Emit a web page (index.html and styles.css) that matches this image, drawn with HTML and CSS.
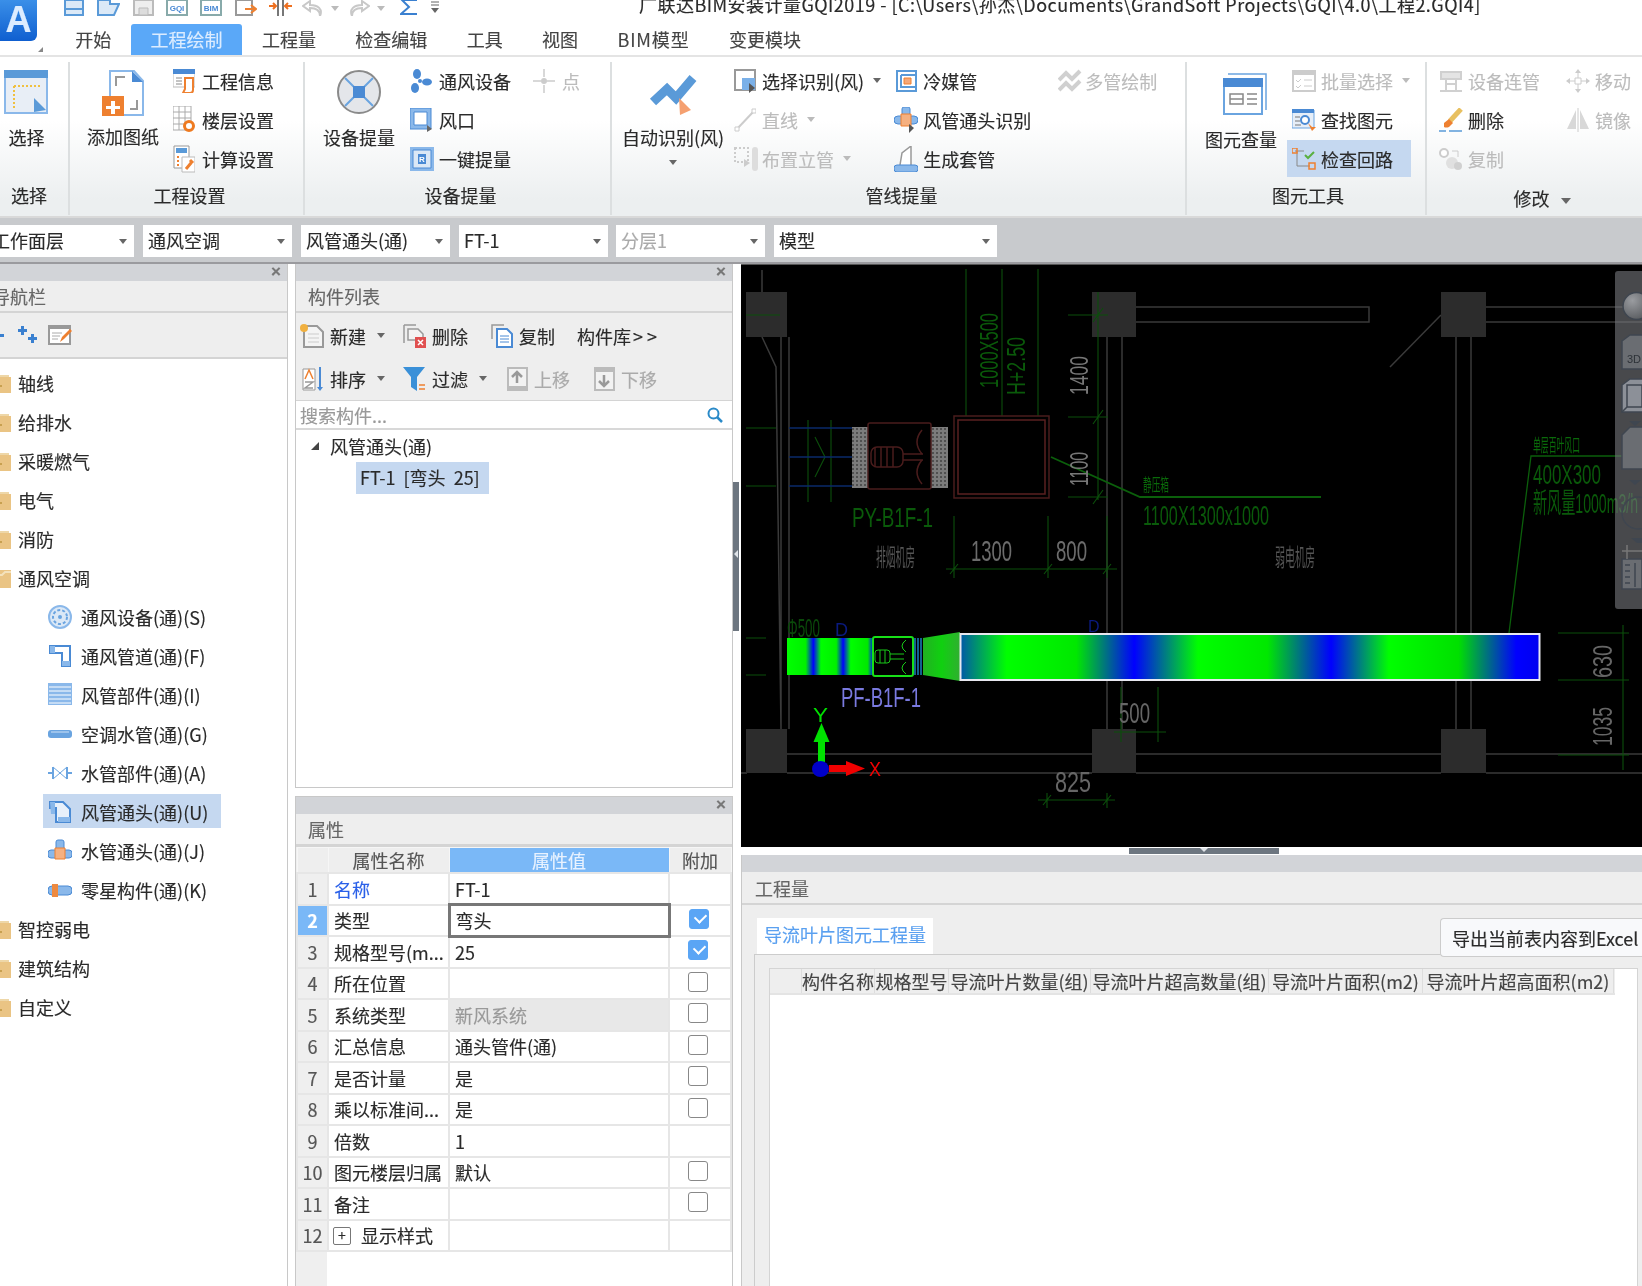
FILE: index.html
```html
<!DOCTYPE html>
<html lang="zh-CN">
<head>
  <meta charset="UTF-8">
  <title>广联达BIM安装计量GQI2019</title>
  <link rel="stylesheet" href="styles.css">
</head>
<body>

<svg class="defs" width="0" height="0">
  <symbol id="i-folder" viewBox="0 0 22 20"><path d="M2 2h18v2H2z" fill="#eed7a8"/><path d="M0 4h22v16H0z" fill="#eac484"/><path d="M8 9v3H5v2h3v3h2v-3h3v-2h-3V9z" fill="#c8a050"/></symbol>
  <symbol id="i-caret" viewBox="0 0 10 6"><path d="M0 0h10L5 6z" fill="#666"/></symbol>
  <symbol id="i-caret-off" viewBox="0 0 10 6"><path d="M0 0h10L5 6z" fill="#bbb"/></symbol>
</svg>

<div class="app">

  <header class="top">
    <div class="logo">A<span class="logo-mark"></span></div>
    <div class="top-right">
      <div class="qat">
        <svg class="qi" width="20" height="16" viewBox="0 0 20 16"><path d="M1 0h18v15H1z" fill="#dbe9f7" stroke="#5a9ad8" stroke-width="2"/><path d="M1 9h18" stroke="#5a9ad8" stroke-width="2"/></svg>
        <svg class="qi" width="23" height="16" viewBox="0 0 23 16"><path d="M1 15V0h12v4h9l-5 11z" fill="#dbe9f7" stroke="#5a9ad8" stroke-width="2"/></svg>
        <svg class="qi" width="21" height="16" viewBox="0 0 21 16"><path d="M1 0h19v15H1z" fill="#eee" stroke="#bbb" stroke-width="2"/><path d="M6 8h9v7H6z" fill="#ddd" stroke="#bbb"/></svg>
        <svg class="qi qi-tight" width="22" height="16" viewBox="0 0 22 16"><path d="M1 0h20v15H1z" fill="#fff" stroke="#8aa" stroke-width="2"/><text x="11" y="11" class="qi-text">GQI</text></svg>
        <svg class="qi qi-tight" width="22" height="16" viewBox="0 0 22 16"><path d="M1 0h20v15H1z" fill="#fff" stroke="#8aa" stroke-width="2"/><text x="11" y="11" class="qi-text">BIM</text></svg>
        <svg class="qi" width="22" height="16" viewBox="0 0 22 16"><path d="M1 0h16v15H1z" fill="#fff" stroke="#999" stroke-width="2"/><path d="M10 9h10M16 5l5 4-5 4" fill="none" stroke="#ee8030" stroke-width="2"/></svg>
        <svg class="qi qi-tight" width="23" height="16" viewBox="0 0 23 16"><path d="M9 0v16M14 0v16" stroke="#777" stroke-width="2"/><path d="M0 6h7M4 3l3 3-3 3M16 6h7M19 3l-3 3 3 3" fill="none" stroke="#ee7020" stroke-width="2"/></svg>
        <svg class="qi qi-undo" width="22" height="16" viewBox="0 0 22 16"><path d="M8 1L1 6l7 5V8c6 0 10 2 10 8 3-7-2-11-10-11z" fill="none" stroke="#c8c8c8" stroke-width="2"/></svg>
        <svg class="caret-q" width="8" height="5"><use href="#i-caret-off"/></svg>
        <svg class="qi qi-redo" width="22" height="16" viewBox="0 0 22 16"><path d="M14 1l7 5-7 5V8C8 8 4 10 4 16 1 9 6 5 14 5z" fill="none" stroke="#c8c8c8" stroke-width="2"/></svg>
        <svg class="caret-q" width="8" height="5"><use href="#i-caret-off"/></svg>
        <svg class="qi qi-wide" width="18" height="16" viewBox="0 0 18 16"><path d="M17 0H2l7 7-8 7h16" fill="none" stroke="#3a80d0" stroke-width="2"/></svg>
        <svg class="qi" width="8" height="14" viewBox="0 0 8 14"><path d="M0 2h8M0 5h8" stroke="#666"/><path d="M0 8h8l-4 5z" fill="#666"/></svg>
      </div>
      <div class="win-title">广联达BIM安装计量GQI2019 - [C:\Users\孙杰\Documents\GrandSoft Projects\GQI\4.0\工程2.GQI4]</div>
      <nav class="tabs">
        <span class="tab">开始</span>
        <span class="tab tab-on">工程绘制</span>
        <span class="tab">工程量</span>
        <span class="tab">检查编辑</span>
        <span class="tab">工具</span>
        <span class="tab">视图</span>
        <span class="tab tab-latin">BIM模型</span>
        <span class="tab">变更模块</span>
      </nav>
    </div>
  </header>

  <section class="ribbon">

    <div class="group g1">
      <div class="group-body">
        <div class="big big-select">
          <svg width="44" height="44" viewBox="0 0 44 44"><path d="M1 1h42v42H1z" fill="#e8eef6" stroke="#8ab8ea" stroke-width="2"/><path d="M0 0h44v8H0z" fill="#5a9ad8"/><path d="M10 16h26M10 16v22" stroke="#f0c040" stroke-width="2" stroke-dasharray="2 2"/><path d="M30 28l12 12-12 2z" fill="#5a9ad8"/></svg>
          <span>选择</span>
        </div>
      </div>
      <div class="group-label">选择</div>
    </div>

    <div class="group g2">
      <div class="group-body">
        <div class="big big-add">
          <svg width="42" height="46" viewBox="0 0 42 46"><path d="M8 1h24l9 10v34H8z" fill="#fff" stroke="#8ab8ea" stroke-width="2"/><path d="M30 1l11 11H30z" fill="#4a8ad4"/><path d="M14 16V7h9M35 30v9h-7" fill="none" stroke="#999" stroke-width="2"/><path d="M0 26h22v22H0z" fill="#ee8030"/><path d="M9 31h4v5h5v3h-5v5H9v-5H4v-3h5z" fill="#fff"/></svg>
          <span>添加图纸</span>
        </div>
        <div class="col col-g2">
          <div class="small">
            <svg width="22" height="24" viewBox="0 0 22 24"><path d="M0 0h22v18H0z" fill="#fff" stroke="#bbb"/><path d="M0 0h22v5H0z" fill="#4a8ad4"/><path d="M3 9h6M3 12h6M3 15h6" stroke="#888"/><path d="M12 9h8v12q0 3-3 3h-7l2-4z" fill="#fff" stroke="#ee8030" stroke-width="2"/></svg>
            <span>工程信息</span>
          </div>
          <div class="small">
            <svg width="22" height="28" viewBox="0 0 22 28"><path d="M0 0h18v24H0zM0 6h18M0 12h18M0 18h18M6 0v24M12 0v24" fill="#fff" stroke="#aaa"/><circle cx="16" cy="20" r="4.500" fill="#fff" stroke="#ee7a20" stroke-width="3"/></svg>
            <span>楼层设置</span>
          </div>
          <div class="small">
            <svg width="22" height="28" viewBox="0 0 22 28"><path d="M1 1h15v22H1z" fill="#fff" stroke="#999"/><path d="M3 3h11v5H3z" fill="#5a9ad8"/><path d="M4 12h2M4 16h2M4 20h2" stroke="#ee8030" stroke-width="2"/><path d="M9 12h13v15H9z" fill="#fff" stroke="#bbb"/><path d="M13 24l5-6M17 15l3 3" stroke="#ee8030" stroke-width="3"/></svg>
            <span>计算设置</span>
          </div>
        </div>
      </div>
      <div class="group-label">工程设置</div>
    </div>

    <div class="group g3">
      <div class="group-body">
        <div class="big big-equip">
          <svg width="44" height="44" viewBox="0 0 44 44"><circle cx="22" cy="22" r="21" fill="#e4e6ea" stroke="#8a8a8a" stroke-width="2"/><path d="M8 8l28 28M36 8L8 36" stroke="#6aa4e0" stroke-width="2"/><path d="M16 16h12v12H16z" fill="#4a8ad4"/></svg>
          <span>设备提量</span>
        </div>
        <div class="col col-g3a">
          <div class="small">
            <svg width="22" height="24" viewBox="0 0 22 24"><circle cx="10" cy="12" r="2" fill="#4a8ad4"/><ellipse cx="7" cy="5" rx="4" ry="5" fill="#4a8ad4"/><ellipse cx="17" cy="13" rx="5" ry="3.500" fill="#4a8ad4"/><ellipse cx="5" cy="19" rx="4" ry="5" fill="#4a8ad4"/></svg>
            <span>通风设备</span>
          </div>
          <div class="small">
            <svg width="22" height="24" viewBox="0 0 22 24"><path d="M0 0h21v21H0z" fill="#8ab8ea" stroke="#4a8ad4"/><path d="M4 4h13v13H4z" fill="#fff" stroke="#4a8ad4"/><path d="M17 17l5 4-5 3z" fill="#666"/></svg>
            <span>风口</span>
          </div>
          <div class="small">
            <svg class="wide-icon" width="24" height="24" viewBox="0 0 24 24"><path d="M0 0h24v24H0z" fill="#8ab8ea"/><path d="M3 3h18v18H3z" fill="#dbe8f6" stroke="#4a8ad4"/><path d="M8 7h8v10H8z" fill="#4a8ad4"/><text x="12" y="15" class="qi-text qi-text-w">R</text></svg>
            <span>一键提量</span>
          </div>
        </div>
        <div class="col col-g3b">
          <div class="small off">
            <svg width="22" height="24" viewBox="0 0 22 24"><path d="M0 12h8M14 12h8M11 0v8M11 16v8" stroke="#ccc" stroke-width="1.500"/><circle cx="11" cy="12" r="3" fill="#ccc"/></svg>
            <span>点</span>
          </div>
        </div>
      </div>
      <div class="group-label">设备提量</div>
    </div>

    <div class="group g4">
      <div class="group-body">
        <div class="big big-auto">
          <svg width="48" height="46" viewBox="0 0 48 46"><path d="M4 32l14-13 9 9 17-20" fill="none" stroke="#5a9ad8" stroke-width="9"/><path d="M30 28l12 12-11 5z" fill="#f5a070"/></svg>
          <span>自动识别(风)</span>
          <svg class="big-caret" width="8" height="5"><use href="#i-caret"/></svg>
        </div>
        <div class="col col-g4a">
          <div class="small">
            <svg width="22" height="24" viewBox="0 0 22 24"><path d="M1 1h20v20H1z" fill="#fff" stroke="#999" stroke-width="2"/><path d="M8 9h13v12H8z" fill="#7ab0e8"/><path d="M15 14l6 5-6 5z" fill="#555"/></svg>
            <span>选择识别(风)</span>
            <svg class="c" width="8" height="5"><use href="#i-caret"/></svg>
          </div>
          <div class="small off">
            <svg width="22" height="24" viewBox="0 0 22 24"><path d="M3 21L20 3" stroke="#ccc" stroke-width="2"/><path d="M1 19h4v4H1zM18 1h4v4h-4z" fill="#fff" stroke="#ccc"/></svg>
            <span>直线</span>
            <svg class="c" width="8" height="5"><use href="#i-caret-off"/></svg>
          </div>
          <div class="small off">
            <svg class="wide-icon" width="24" height="24" viewBox="0 0 24 24"><path d="M1 1h13v14H1z" fill="none" stroke="#ccc" stroke-width="2" stroke-dasharray="2 2"/><path d="M10 12l6 4-6 4z" fill="#ccc"/><rect x="18" y="0" width="6" height="24" rx="3" fill="#ddd"/></svg>
            <span>布置立管</span>
            <svg class="c" width="8" height="5"><use href="#i-caret-off"/></svg>
          </div>
        </div>
        <div class="col col-g4b">
          <div class="small">
            <svg class="icon-inset" width="21" height="22" viewBox="0 0 21 22"><path d="M1 1h19v20H1z" fill="#fff" stroke="#5a9ad8" stroke-width="2"/><path d="M5 5h15M5 5v12h15" fill="none" stroke="#5a9ad8" stroke-width="2"/><path d="M8 8h7v6H8z" fill="#f5a878" stroke="#ee8030"/></svg>
            <span>冷媒管</span>
          </div>
          <div class="small">
            <svg width="24" height="26" viewBox="0 0 24 26"><rect x="8" y="0" width="8" height="8" rx="2" fill="#8ab8ea" stroke="#4a8ad4"/><rect x="0" y="9" width="24" height="8" rx="4" fill="#8ab8ea" stroke="#4a8ad4"/><path d="M7 7h10v12H7z" fill="#f5b080" stroke="#ee8030"/><path d="M15 17l5 4-5 5z" fill="#555"/></svg>
            <span>风管通头识别</span>
          </div>
          <div class="small">
            <svg width="24" height="26" viewBox="0 0 24 26"><path d="M6 19L8 7l9-7v19" fill="#fff" stroke="#999" stroke-width="1.500"/><rect x="0" y="19" width="24" height="7" rx="3" fill="#8ab8ea" stroke="#4a8ad4"/></svg>
            <span>生成套管</span>
          </div>
        </div>
        <div class="col col-g4c">
          <div class="small off">
            <svg width="24" height="24" viewBox="0 0 24 24"><path d="M1 11l7-7 6 6 8-8M1 21l7-7 6 6 8-8" fill="none" stroke="#d0d0d0" stroke-width="4"/></svg>
            <span>多管绘制</span>
          </div>
        </div>
      </div>
      <div class="group-label">管线提量</div>
    </div>

    <div class="group g5">
      <div class="group-body">
        <div class="big big-count">
          <svg width="44" height="42" viewBox="0 0 44 42"><path d="M5 1h38v36" fill="none" stroke="#6aa4e0" stroke-width="1.500"/><path d="M1 6h38v35H1z" fill="#fff" stroke="#6aa4e0" stroke-width="2"/><path d="M0 5h40v9H0z" fill="#4a8ad4"/><path d="M7 21h13v10H7zM7 26h13M24 21h10M24 26h10M24 31h10" fill="none" stroke="#888" stroke-width="1.500"/></svg>
          <span>图元查量</span>
        </div>
        <div class="col col-g5">
          <div class="small off">
            <svg width="24" height="22" viewBox="0 0 24 22"><path d="M1 1h22v20H1z" fill="#fff" stroke="#ccc" stroke-width="2"/><path d="M0 0h24v5H0z" fill="#ccc"/><path d="M4 10l2 2 3-3M4 16l2 2 3-3M12 10h8M12 16h8" fill="none" stroke="#ccc"/></svg>
            <span>批量选择</span>
            <svg class="c" width="8" height="5"><use href="#i-caret-off"/></svg>
          </div>
          <div class="small">
            <svg width="24" height="22" viewBox="0 0 24 22"><path d="M0 1h22v18H0z" fill="#e6eef8" stroke="#6aa4e0"/><path d="M0 0h22v4H0z" fill="#4a8ad4"/><circle cx="13" cy="11" r="4" fill="#fff" stroke="#4a8ad4" stroke-width="2"/><path d="M3 8h5M3 12h5M3 16h6" stroke="#777"/><path d="M16 14l4 4 4 0-4 4z" fill="#ee8030"/></svg>
            <span>查找图元</span>
          </div>
          <div class="small small-on">
            <svg width="24" height="22" viewBox="0 0 24 22"><path d="M3 3h9M5 3v15h13" fill="none" stroke="#888"/><path d="M0 0h5v5H0zM17 15h6v6h-6z" fill="none" stroke="#ee8030" stroke-width="1.500"/><path d="M13 7l3 3 6-6" fill="none" stroke="#5ab040" stroke-width="2"/></svg>
            <span>检查回路</span>
          </div>
        </div>
      </div>
      <div class="group-label">图元工具</div>
    </div>

    <div class="group g6">
      <div class="group-body">
        <div class="col col-g6a">
          <div class="small off">
            <svg width="24" height="22" viewBox="0 0 24 22"><path d="M2 2h20v7H2zM7 9v12M17 9v12M1 21h22M7 14h10" fill="#e4e4e4" stroke="#d0d0d0" stroke-width="2"/></svg>
            <span>设备连管</span>
          </div>
          <div class="small">
            <svg width="24" height="24" viewBox="0 0 24 24"><path d="M11 13L22 1" stroke="#e8c060" stroke-width="5"/><path d="M5 15l5-4 4 4-4 4q-3 1-5 0z" fill="#ee8030"/><path d="M0 23h7M10 23h13" stroke="#5a9ad8" stroke-width="1.500"/></svg>
            <span>删除</span>
          </div>
          <div class="small off">
            <svg width="24" height="22" viewBox="0 0 24 22"><circle cx="5" cy="5" r="4" fill="#fff" stroke="#ccc" stroke-width="2"/><circle cx="13" cy="15" r="6" fill="#e0e0e0"/><circle cx="19" cy="18" r="4" fill="#d0d0d0"/><path d="M13 3h6v6" fill="none" stroke="#ccc"/></svg>
            <span>复制</span>
          </div>
        </div>
        <div class="col col-g6b">
          <div class="small off">
            <svg width="24" height="24" viewBox="0 0 24 24"><path d="M12 0l3 4h-6zM12 24l-3-4h6zM0 12l4-3v6zM24 12l-4 3V9z" fill="#ccc"/><path d="M9 9h6v6H9zM12 4v5M12 15v5M4 12h5M15 12h5" fill="none" stroke="#ccc"/></svg>
            <span>移动</span>
          </div>
          <div class="small off">
            <svg width="24" height="24" viewBox="0 0 24 24"><path d="M10 2L1 21h9zM14 2l9 19h-9z" fill="#d8d8d8"/><path d="M12 0v24" stroke="#ccc"/></svg>
            <span>镜像</span>
          </div>
        </div>
      </div>
      <div class="group-label group-label-fold">修改<svg class="c-fold" width="10" height="6"><use href="#i-caret"/></svg></div>
    </div>

  </section>

  <div class="combos">
    <div class="combo combo-first"><span>工作面层</span><i></i></div>
    <div class="combo"><span>通风空调</span><i></i></div>
    <div class="combo"><span>风管通头(通)</span><i></i></div>
    <div class="combo"><span>FT-1</span><i></i></div>
    <div class="combo combo-off"><span>分层1</span><i></i></div>
    <div class="combo combo-wide"><span>模型</span><i></i></div>
  </div>

  <main class="work">

    <aside class="nav panel">
      <div class="panel-bar">×</div>
      <div class="panel-title nav-title">导航栏</div>
      <div class="nav-tools">
        <span class="minus"></span>
        <svg class="plus2" width="20" height="18" viewBox="0 0 20 18"><path d="M3 0h3v3h3v3H6v3H3V6H0V3h3zM13 8h3v3h3v3h-3v3h-3v-3h-3v-3h3z" fill="#3a80d0"/></svg>
        <svg class="edit" width="25" height="20" viewBox="0 0 25 20"><path d="M1 1h21v18H1z" fill="#fff" stroke="#999" stroke-width="2"/><path d="M0 0h22v4H0z" fill="#999"/><path d="M4 8h10M4 11h8M4 14h6" stroke="#aaa"/><path d="M12 17l2-5 8-8 2 2-8 8z" fill="#ee8030"/></svg>
      </div>
      <ul class="tree">
        <li class="folder"><svg width="22" height="20"><use href="#i-folder"/></svg>轴线</li>
        <li class="folder"><svg width="22" height="20"><use href="#i-folder"/></svg>给排水</li>
        <li class="folder"><svg width="22" height="20"><use href="#i-folder"/></svg>采暖燃气</li>
        <li class="folder"><svg width="22" height="20"><use href="#i-folder"/></svg>电气</li>
        <li class="folder"><svg width="22" height="20"><use href="#i-folder"/></svg>消防</li>
        <li class="folder"><svg width="22" height="20" viewBox="0 0 22 20"><path d="M0 2h22v18H0z" fill="#eac484"/><path d="M0 7h13l3-3h6" fill="none" stroke="#f4e2bc" stroke-width="2"/><path d="M0 12h8" stroke="#c8a050" stroke-width="2"/></svg>通风空调</li>
        <li class="leaf">
          <svg width="24" height="24" viewBox="0 0 24 24"><circle cx="12" cy="12" r="11" fill="#dbe8f6" stroke="#8ab8ea" stroke-width="2"/><circle cx="12" cy="12" r="7" fill="none" stroke="#6aa4e0" stroke-dasharray="3 2" stroke-width="2"/><circle cx="12" cy="12" r="2" fill="#6aa4e0"/></svg>
          通风设备(通)(S)
        </li>
        <li class="leaf">
          <svg width="24" height="24" viewBox="0 0 24 24"><path d="M2 2h20v20h-8V9H2z" fill="#fff" stroke="#4a8ad4" stroke-width="2"/><path d="M2 2h5v7H2zM14 17h8v5h-8z" fill="#8ab8ea"/></svg>
          通风管道(通)(F)
        </li>
        <li class="leaf">
          <svg width="24" height="24" viewBox="0 0 24 24"><path d="M0 0h24v22H0z" fill="#8ab8ea"/><path d="M1 4h22M1 8h22M1 12h22M1 16h22M1 20h22" stroke="#fff"/></svg>
          风管部件(通)(I)
        </li>
        <li class="leaf">
          <svg width="24" height="24" viewBox="0 0 24 24"><rect x="0" y="8" width="24" height="8" rx="3" fill="#6aa4e0"/><path d="M3 10h18" stroke="#cfe2f7"/></svg>
          空调水管(通)(G)
        </li>
        <li class="leaf">
          <svg width="24" height="24" viewBox="0 0 24 24"><path d="M0 12h5M19 12h5M5 6v12M19 6v12" stroke="#6aa4e0" stroke-width="2"/><path d="M5 6l14 12M19 6L5 18" stroke="#6aa4e0"/></svg>
          水管部件(通)(A)
        </li>
        <li class="leaf leaf-on">
          <svg width="24" height="24" viewBox="0 0 24 24"><path d="M2 2h13l7 7v13H8V8H2z" fill="#e8f0fa" stroke="#4a8ad4" stroke-width="2"/><path d="M2 2h5v12h-4zM10 17h12v5H10z" fill="#8ab8ea"/></svg>
          风管通头(通)(U)
        </li>
        <li class="leaf">
          <svg width="24" height="24" viewBox="0 0 24 24"><rect x="8" y="1" width="8" height="10" rx="2" fill="#8ab8ea" stroke="#4a8ad4"/><rect x="0" y="11" width="24" height="8" rx="3" fill="#8ab8ea" stroke="#4a8ad4"/><path d="M7 9h10v11H7z" fill="#f5b080" stroke="#ee8030"/></svg>
          水管通头(通)(J)
        </li>
        <li class="leaf">
          <svg width="24" height="24" viewBox="0 0 24 24"><rect x="0" y="8" width="24" height="9" rx="4" fill="#8ab8ea" stroke="#4a8ad4"/><path d="M4 6h6v13H4z" fill="#ee8a40"/></svg>
          零星构件(通)(K)
        </li>
        <li class="folder"><svg width="22" height="20"><use href="#i-folder"/></svg>智控弱电</li>
        <li class="folder"><svg width="22" height="20"><use href="#i-folder"/></svg>建筑结构</li>
        <li class="folder"><svg width="22" height="20"><use href="#i-folder"/></svg>自定义</li>
      </ul>
    </aside>

    <div class="mid">

      <section class="panel list">
        <div class="panel-bar">×</div>
        <div class="panel-title">构件列表</div>
        <div class="list-tools">
          <div class="tool-row">
            <span class="tool t-new">
              <svg width="24" height="24" viewBox="0 0 24 24"><path d="M4 2h13l6 6v15H4z" fill="#f4f4f4" stroke="#999" stroke-width="2"/><path d="M8 10h11M8 14h11M8 18h11" stroke="#ccc"/><circle cx="4" cy="4" r="4" fill="#f0b040"/></svg>
              新建<svg class="c" width="8" height="5"><use href="#i-caret"/></svg>
            </span>
            <span class="tool t-del">
              <svg width="23" height="24" viewBox="0 0 23 24"><path d="M1 1h12M1 1v18M5 5h10l5 5v6H5v-11z" fill="#f4f4f4" stroke="#999" stroke-width="1.500"/><path d="M12 13h11v11H12z" fill="#e05050"/><path d="M15 16l5 5M20 16l-5 5" stroke="#fff" stroke-width="1.500"/></svg>
              删除
            </span>
            <span class="tool t-copy">
              <svg width="22" height="24" viewBox="0 0 22 24"><path d="M1 15V1h12" fill="none" stroke="#999" stroke-width="1.500"/><path d="M6 5h10l5 5v13H6z" fill="#fff" stroke="#4a8ad4" stroke-width="2"/><path d="M9 12h9M9 15h9M9 18h9" stroke="#4a8ad4"/></svg>
              复制
            </span>
            <span class="tool t-lib">构件库<span class="more">&gt;&gt;</span></span>
          </div>
          <div class="tool-row">
            <span class="tool t-sort">
              <svg width="22" height="24" viewBox="0 0 22 24"><path d="M1 2h12v21H1z" fill="#fff" stroke="#999"/><path d="M3 12l4-9 4 9" fill="none" stroke="#ee8030" stroke-width="1.500"/><path d="M3 15h8l-8 6h8" fill="none" stroke="#999" stroke-width="1.500"/><path d="M18 0v21" stroke="#4a8ad4" stroke-width="2"/><path d="M15 20h6l-3 4z" fill="#4a8ad4"/></svg>
              排序<svg class="c" width="8" height="5"><use href="#i-caret"/></svg>
            </span>
            <span class="tool t-filter">
              <svg width="23" height="24" viewBox="0 0 23 24"><path d="M0 0h22l-8 10v14l-6-4V10z" fill="#3a90d8"/><path d="M16 18h6M16 22h6" stroke="#ee8030" stroke-width="1.500"/></svg>
              过滤<svg class="c" width="8" height="5"><use href="#i-caret"/></svg>
            </span>
            <span class="tool t-off t-up">
              <svg width="21" height="24" viewBox="0 0 21 24"><path d="M1 1h19v22H1z" fill="#f2f2f2" stroke="#bbb" stroke-width="2"/><path d="M0 19h21v5H0z" fill="#bbb"/><path d="M10 16V6M5 10l5-5 5 5" fill="none" stroke="#999" stroke-width="2.500"/></svg>
              上移
            </span>
            <span class="tool t-off t-down">
              <svg width="21" height="24" viewBox="0 0 21 24"><path d="M1 1h19v22H1z" fill="#f2f2f2" stroke="#bbb" stroke-width="2"/><path d="M0 0h21v5H0z" fill="#bbb"/><path d="M10 8v10M5 14l5 5 5-5" fill="none" stroke="#999" stroke-width="2.500"/></svg>
              下移
            </span>
          </div>
        </div>
        <div class="search">
          <span>搜索构件...</span>
          <svg width="16" height="16" viewBox="0 0 16 16"><circle cx="6.500" cy="6.500" r="5" fill="none" stroke="#2a8ac8" stroke-width="2"/><path d="M10 10l5 5" stroke="#2a8ac8" stroke-width="2.500"/></svg>
        </div>
        <div class="list-tree">
          <div class="root"><i></i>风管通头(通)</div>
          <div class="item">FT-1 [弯头 25]</div>
        </div>
      </section>

      <section class="panel props">
        <div class="panel-bar">×</div>
        <div class="panel-title">属性</div>
        <div class="props-body">
          <table class="grid">
            <colgroup><col class="c0"><col class="c1"><col class="c2"><col class="c3"></colgroup>
            <thead>
              <tr><th></th><th>属性名称</th><th class="th-on">属性值</th><th>附加</th></tr>
            </thead>
            <tbody>
              <tr><td class="n">1</td><td class="link">名称</td><td>FT-1</td><td></td></tr>
              <tr><td class="n n-on">2</td><td>类型</td><td class="cell-edit">弯头</td><td class="ck"><span class="box box-on"></span></td></tr>
              <tr><td class="n">3</td><td>规格型号(m...</td><td>25</td><td class="ck"><span class="box box-on"></span></td></tr>
              <tr><td class="n">4</td><td>所在位置</td><td></td><td class="ck"><span class="box"></span></td></tr>
              <tr><td class="n">5</td><td>系统类型</td><td class="cell-off">新风系统</td><td class="ck"><span class="box"></span></td></tr>
              <tr><td class="n">6</td><td>汇总信息</td><td>通头管件(通)</td><td class="ck"><span class="box"></span></td></tr>
              <tr><td class="n">7</td><td>是否计量</td><td>是</td><td class="ck"><span class="box"></span></td></tr>
              <tr><td class="n">8</td><td>乘以标准间...</td><td>是</td><td class="ck"><span class="box"></span></td></tr>
              <tr><td class="n">9</td><td>倍数</td><td>1</td><td></td></tr>
              <tr><td class="n">10</td><td>图元楼层归属</td><td>默认</td><td class="ck"><span class="box"></span></td></tr>
              <tr><td class="n">11</td><td>备注</td><td></td><td class="ck"><span class="box"></span></td></tr>
              <tr><td class="n">12</td><td><span class="expand">+</span>显示样式</td><td></td><td></td></tr>
            </tbody>
          </table>
        </div>
      </section>

      <span class="splitter"></span>
    </div>

    <div class="right">
      <div class="cad">
        <svg class="cad-svg" width="901" height="582" viewBox="741 265 901 582">
          <rect x="741" y="265" width="901" height="582" fill="#000"/>

          <defs>
            <pattern id="speckle" width="4" height="4" patternUnits="userSpaceOnUse">
              <rect width="4" height="4" fill="#7c7c7c"/>
              <rect x="0" y="0" width="2" height="2" fill="#505050"/>
            </pattern>
          </defs>

          <!-- walls -->
          <g fill="none" stroke="#3a3a3a" stroke-width="1.500">
            <path d="M762 270v22M762 337l14 30 5 362M781 337v392M789 337v392"/>
            <path d="M1107 337v392M1122 337v392M1456 337v392M1471 337v392"/>
            <path d="M1136 307h233v15h-233M1486 307h156M1486 322h156"/>
            <path d="M787 754h305M1136 754h305M1486 754h156M787 773h305M1136 773h305M1486 773h156M741 773h6"/>
            <path d="M1441 315l-51 52"/>
          </g>
          <g fill="#2c2c2c">
            <rect x="746" y="292" width="41" height="45"/>
            <rect x="1092" y="292" width="44" height="45"/>
            <rect x="1441" y="292" width="45" height="45"/>
            <rect x="746" y="729" width="41" height="44"/>
            <rect x="1092" y="729" width="44" height="44"/>
            <rect x="1441" y="729" width="45" height="44"/>
          </g>

          <!-- green dims -->
          <g fill="none" stroke="#0b4f0b" stroke-width="1.100">
            <path d="M966 269v147M1002 269v147M1038 269v147"/>
            <path d="M1098 292v208M1068 315h40M1068 417h40M1068 497h40M1093 322l10-14M1093 424l10-14M1093 504l10-14"/>
            <path d="M746 315h34"/>
            <path d="M954 516v62M1048 516v62M1107 516v62M946 569h171M950 574l8-10M1044 574l8-10M1103 574l8-10"/>
            <path d="M746 428h30M746 486h30M808 420v82M831 420v82M815 437l10 20-10 20"/>
            <path d="M1558 633h71M1558 680h71M1558 755h71M1623 625v145"/>
            <path d="M1114 732h52M1158 687v55M1121 687v55"/>
            <path d="M1038 800h77M1047 808v-15M1107 808v-15M1043 805l8-10M1103 805l8-10" />
            <path d="M746 638h20M746 675h20"/>
          </g>
          <path d="M1051 457l89 40h181" fill="none" stroke="#0b5f0b" stroke-width="1.800"/>
          <path d="M1642 456h-111l-22 177" fill="none" stroke="#0b5f0b" stroke-width="1.300"/>

          <!-- exhaust fan -->
          <path d="M789 428h63M789 457h63M789 486h63" stroke="#0a2a6a" stroke-width="1.500"/>
          <rect x="852" y="427" width="16" height="61" fill="url(#speckle)"/>
          <rect x="931" y="427" width="17" height="61" fill="url(#speckle)"/>
          <g fill="none" stroke="#4a1c1c" stroke-width="1.500">
            <rect x="868" y="423" width="63" height="66" rx="2"/>
            <rect x="954" y="416" width="95" height="82"/>
            <rect x="958" y="420" width="87" height="74" stroke="#5a2020"/>
            <rect x="871" y="447" width="32" height="20" rx="6"/>
            <path d="M875 447v20M881 447v20M887 447v20M893 447v20M903 454h20M903 460h20M922 430q-10 12 0 24M922 460q-10 12 0 24"/>
          </g>

          <!-- supply duct -->
          <defs>
            <linearGradient id="duct-grad">
              <stop offset="0" stop-color="#0058a8"/>
              <stop offset=".08" stop-color="#00ff00"/>
              <stop offset=".2" stop-color="#00e800"/>
              <stop offset=".3" stop-color="#0000ff"/>
              <stop offset=".41" stop-color="#00ff00"/>
              <stop offset=".53" stop-color="#00e800"/>
              <stop offset=".64" stop-color="#0000ff"/>
              <stop offset=".74" stop-color="#00ff00"/>
              <stop offset=".86" stop-color="#00e000"/>
              <stop offset=".96" stop-color="#0000ff"/>
              <stop offset="1" stop-color="#0000f0"/>
            </linearGradient>
            <linearGradient id="inlet-grad">
              <stop offset="0" stop-color="#00ff00"/>
              <stop offset=".22" stop-color="#00f000"/>
              <stop offset=".31" stop-color="#0000ff"/>
              <stop offset=".4" stop-color="#00ff00"/>
              <stop offset=".58" stop-color="#00f000"/>
              <stop offset=".66" stop-color="#0000ff"/>
              <stop offset=".75" stop-color="#00ff00"/>
              <stop offset=".95" stop-color="#00e800"/>
              <stop offset="1" stop-color="#0040c0"/>
            </linearGradient>
            <linearGradient id="reduce-grad">
              <stop offset="0" stop-color="#22b022"/>
              <stop offset=".5" stop-color="#10d010"/>
              <stop offset="1" stop-color="#30b030"/>
            </linearGradient>
          </defs>
          <rect x="787" y="638" width="85" height="37" fill="url(#inlet-grad)"/>
          <g fill="none" stroke="#18e018" stroke-width="2">
            <rect x="873" y="637" width="40" height="39" rx="2"/>
          </g>
          <g fill="none" stroke="#18c818" stroke-width="1">
            <rect x="875" y="650" width="15" height="13" rx="3"/>
            <path d="M880 650v13M885 650v13M890 654h14M890 659h14M906 640q-8 6 0 12M906 662q-8 6 0 12"/>
          </g>
          <path d="M915 638v37M918 638v37M921 638v37" stroke="#1a80c0" stroke-width="1.500"/>
          <path d="M923 638l37-6v49l-37-6z" fill="url(#reduce-grad)"/>
          <rect x="960.500" y="634" width="579" height="46" fill="url(#duct-grad)" stroke="#e8e8f0" stroke-width="2"/>

          <!-- labels -->
          <g class="cad-t">
            <text x="0" y="0" transform="translate(998 388) rotate(-90)" textLength="75" lengthAdjust="spacingAndGlyphs" font-size="26" fill="#0a5a0a">1000X500</text>
            <text x="0" y="0" transform="translate(1025 395) rotate(-90)" textLength="58" lengthAdjust="spacingAndGlyphs" font-size="26" fill="#0a5a0a">H+2.50</text>
            <text x="0" y="0" transform="translate(1088 395) rotate(-90)" textLength="39" lengthAdjust="spacingAndGlyphs" font-size="25" fill="#777">1400</text>
            <text x="0" y="0" transform="translate(1088 486) rotate(-90)" textLength="34" lengthAdjust="spacingAndGlyphs" font-size="25" fill="#777">1100</text>
            <text x="852" y="527" textLength="81" lengthAdjust="spacingAndGlyphs" font-size="28" fill="#0a5a0a">PY-B1F-1</text>
            <text x="971" y="561" textLength="41" lengthAdjust="spacingAndGlyphs" font-size="30" fill="#6c6c6c">1300</text>
            <text x="1056" y="561" textLength="31" lengthAdjust="spacingAndGlyphs" font-size="30" fill="#6c6c6c">800</text>
            <text x="876" y="566" textLength="39" lengthAdjust="spacingAndGlyphs" font-size="24" fill="#555">排烟机房</text>
            <text x="1275" y="566" textLength="40" lengthAdjust="spacingAndGlyphs" font-size="24" fill="#555">弱电机房</text>
            <text x="1143" y="491" textLength="26" lengthAdjust="spacingAndGlyphs" font-size="17" fill="#0a6a0a">静压箱</text>
            <text x="1143" y="525" textLength="126" lengthAdjust="spacingAndGlyphs" font-size="28" fill="#0a5a0a">1100X1300x1000</text>
            <text x="1533" y="452" textLength="47" lengthAdjust="spacingAndGlyphs" font-size="18" fill="#0a6a0a">单层百叶风口</text>
            <text x="1533" y="484" textLength="68" lengthAdjust="spacingAndGlyphs" font-size="28" fill="#0a5a0a">400X300</text>
            <text x="1533" y="513" textLength="105" lengthAdjust="spacingAndGlyphs" font-size="28" fill="#0a5a0a">新风量1000m3/h</text>
            <text x="787" y="637" textLength="33" lengthAdjust="spacingAndGlyphs" font-size="26" fill="#0a4a0a">Φ500</text>
            <text x="835" y="636" font-size="18" fill="#0a1a80">D</text>
            <text x="1088" y="632" font-size="16" fill="#0a1a80">D</text>
            <text x="841" y="707" textLength="80" lengthAdjust="spacingAndGlyphs" font-size="28" fill="#7a7ae0">PF-B1F-1</text>
            <text x="0" y="0" transform="translate(1612 678) rotate(-90)" textLength="33" lengthAdjust="spacingAndGlyphs" font-size="28" fill="#666">630</text>
            <text x="0" y="0" transform="translate(1612 746) rotate(-90)" textLength="39" lengthAdjust="spacingAndGlyphs" font-size="28" fill="#666">1035</text>
            <text x="1119" y="723" textLength="31" lengthAdjust="spacingAndGlyphs" font-size="29" fill="#666">500</text>
            <text x="1055" y="792" textLength="36" lengthAdjust="spacingAndGlyphs" font-size="29" fill="#666">825</text>
          </g>

          <!-- axes -->
          <path d="M818 742h7v20h-7z" fill="#00e000"/>
          <path d="M821.500 723l8 19h-16z" fill="#00e000"/>
          <path d="M829 765h18v7h-18z" fill="#f00000"/>
          <path d="M846 761l19 7.500-19 7.500z" fill="#f00000"/>
          <ellipse cx="820.500" cy="769" rx="8.500" ry="8" fill="#0000c8"/>
          <text x="813" y="722" textLength="15" lengthAdjust="spacingAndGlyphs" font-size="20" class="cad-axis" fill="#00e000">Y</text>
          <text x="869" y="776" textLength="12" lengthAdjust="spacingAndGlyphs" font-size="20" class="cad-axis" fill="#f00000">X</text>
        </svg>

        <div class="view-bar">
          <svg width="27" height="338" viewBox="0 0 27 338">
            <defs>
              <radialGradient id="ball" cx=".35" cy=".3" r=".8">
                <stop offset="0" stop-color="#9a9ca0"/>
                <stop offset="1" stop-color="#55585c"/>
              </radialGradient>
            </defs>
            <g fill="none" stroke="#3f4650" stroke-width="1.500">
              <circle cx="21.500" cy="35" r="13.500" fill="url(#ball)"/>
              <path d="M7 70l8-6h14v34H7z" fill="#6a6d72"/>
              <path d="M7 114l8-6h14v33H7z" fill="#8c9098"/>
              <path d="M12 114h15v22H12zM7 141l5-5"/>
              <path d="M7 164l8-8h14v42H7z" fill="#6a6d72"/>
              <circle cx="23" cy="242" r="16"/>
              <path d="M7 288h20v30H7z" fill="#6a6d72"/>
              <path d="M7 280h20M12 274v14" stroke="#777"/>
              <path d="M10 294h5M10 300h5M10 306h5M10 312h5M20 292v24"/>
            </g>
            <path d="M14 150h12l-6 5zM14 209h12l-6 5zM16 267h11v5H22z" fill="#3f4650"/>
            <text x="12" y="92" class="view-t">3D</text>
          </svg>
        </div>
      </div>

      <div class="cad-handle"><span></span></div>

      <section class="panel qty">
        <div class="panel-bar"></div>
        <div class="panel-title">工程量</div>
        <div class="qty-body">
          <div class="qty-head">
            <div class="qty-tab">导流叶片图元工程量</div>
            <div class="qty-btn">导出当前表内容到Excel</div>
          </div>
          <div class="qty-pane">
            <div class="qty-table">
              <div class="qty-row">
                <span class="q0"></span>
                <span class="q1">构件名称</span>
                <span class="q2">规格型号</span>
                <span class="q3">导流叶片数量(组)</span>
                <span class="q4">导流叶片超高数量(组)</span>
                <span class="q5">导流叶片面积(m2)</span>
                <span class="q6">导流叶片超高面积(m2)</span>
              </div>
            </div>
          </div>
        </div>
      </section>
    </div>

  </main>
</div>

</body>
</html>
```

FILE: styles.css
```css
* {
  box-sizing: border-box;
}

html, body {
  margin: 0;
  padding: 0;
  background: #fff;
}

body {
  width: 1642px;
  height: 1286px;
  overflow: hidden;
  font-family: "Noto Sans CJK SC", "Noto Sans", sans-serif;
  font-size: 18px;
  line-height: 24px;
  color: #2a2a2a;
  -webkit-text-stroke: 0.15px currentColor;
}

.defs {
  position: absolute;
}

.app {
  width: 1642px;
  height: 1286px;
  display: flex;
  flex-direction: column;
  overflow: hidden;
  filter: blur(0.45px);
}

/* title + tabs */
.top {
  height: 55px;
  display: flex;
  flex: none;
  background: #fff;
}

.logo {
  position: relative;
  width: 37px;
  height: 41px;
  margin-right: 18px;
  background: linear-gradient(#3a8fe8, #0f5fd0);
  border-radius: 0 0 6px 0;
  color: #dcecff;
  font-family: "Liberation Sans", sans-serif;
  font-size: 36px;
  font-weight: bold;
  line-height: 40px;
  text-align: center;
}

.logo-mark {
  position: absolute;
  left: 38px;
  top: 47px;
  border-left: 5px solid transparent;
  border-bottom: 5px solid #888;
}

.top-right {
  flex: 1;
  position: relative;
}

.qat {
  display: flex;
  align-items: flex-start;
  height: 24px;
  padding-left: 9px;
}

.qi {
  display: block;
  margin-left: 13px;
}

.qi:first-child {
  margin-left: 0;
}

.qi-tight {
  margin-left: 12px;
}

.qi-undo {
  margin-left: 10px;
}

.qi-redo {
  margin-left: 9px;
}

.qi-wide {
  margin-left: 15px;
}

.qi-text {
  font-family: "Liberation Sans", sans-serif;
  font-size: 8px;
  font-weight: bold;
  fill: #4a8ad4;
  text-anchor: middle;
  -webkit-text-stroke: 0;
}

.qi-text-w {
  fill: #fff;
}

.caret-q {
  display: block;
  margin: 6px 0 0 7px;
}

.win-title {
  position: absolute;
  left: 584px;
  top: -8px;
  font-size: 18px;
  letter-spacing: 0.47px;
  white-space: nowrap;
}

.tabs {
  display: flex;
  height: 31px;
  padding-left: 0.500px;
}

.tab {
  padding: 0 19.700px;
  line-height: 31px;
  color: #444;
}

.tab-latin {
  letter-spacing: 0.900px;
}

.tab-on {
  background: #5aa8f8;
  color: #dcecff;
  border-radius: 3px 3px 0 0;
}

/* ribbon */
.ribbon {
  height: 163px;
  flex: none;
  display: flex;
  overflow: hidden;
  padding-top: 5px;
  border-top: 2px solid #e4e4e4;
  background: linear-gradient(#fff 40%, #eceff0 90%);
  border-bottom: 2px solid #d9d9d9;
}

.group {
  flex: none;
  display: flex;
  flex-direction: column;
  height: 153px;
  border-right: 2px solid #dcdfe0;
}

.g1 { width: 70px; }
.g2 { width: 235px; }
.g3 { width: 307px; }
.g4 { width: 575px; }
.g5 { width: 240px; }
.g6 { width: 230px; border-right: 0; }

.group-body {
  flex: 1;
  display: flex;
  position: relative;
}

.group-label {
  height: 35px;
  padding-left: 6px;
  line-height: 30px;
  text-align: center;
}

.g1 .group-label {
  padding-left: 0;
  padding-right: 10px;
}

.g5 .group-label {
  padding-left: 4px;
}

.group-label-fold {
  padding: 3px 0 0;
}

.c-fold {
  margin-left: 11px;
  vertical-align: 2px;
}

.big {
  flex: none;
  display: flex;
  flex-direction: column;
  align-items: center;
  white-space: nowrap;
  padding-top: 8px;
}

.big > span {
  line-height: 24px;
}

.big svg {
  display: block;
}

.big .big-caret {
  margin: 11px 0 0;
}

.big-select { width: 50px; margin-left: 1px; }
.big-select svg { margin-bottom: 11px; }
.big-select span { margin-left: 1px; }
.big-add { width: 74px; margin-left: 16px; }
.big-add svg { margin-bottom: 8px; }
.big-equip { width: 72px; margin-left: 18px; }
.big-equip svg { margin-bottom: 11px; }
.big-auto { width: 102px; margin-left: 10px; }
.big-auto svg:first-child { margin-bottom: 9px; }
.big-count { width: 72px; margin-left: 18px; }
.big-count svg { margin: 3px 0 12px 8px; }

.col {
  flex: none;
  display: flex;
  flex-direction: column;
  margin-top: -1px;
}

.small {
  display: flex;
  align-items: center;
  height: 39px;
  white-space: nowrap;
}

.small > svg:first-child {
  flex: none;
  margin-right: 7px;
}

.small .c {
  margin-left: 9px;
}

.off {
  color: #bcbcbc;
}

.small-on {
  height: 37px;
  margin: 1px 0;
  width: 124px;
  margin-left: -5px;
  padding-left: 5px;
  background: #c5d8f0;
}

.col-g2 { margin-left: 13px; }
.col-g3a { margin-left: 15px; }
.col-g3b { margin-left: 22px; }
.col-g4a { margin-left: 10px; }
.col-g4b { margin-left: 13px; width: 164px; }
.col-g4c { margin-left: 0; }
.col-g5 { margin-left: 15px; }
.col-g6a { margin-left: 12px; }
.col-g6b { margin-left: 26px; }

.small > .wide-icon:first-child { margin-right: 5px; }
.g4 .small > svg:first-child { margin-right: 6px; }
.g4 .small > .wide-icon:first-child { margin-right: 4px; }
.col-g4b .small > svg:first-child { margin-right: 5px; }
.col-g4b .small > .icon-inset:first-child { margin: 0 6px 0 2px; }
.col-g4c .small > svg:first-child { margin-right: 3px; }
.col-g5 .small > svg:first-child { margin-right: 5px; }
.col-g6a .small > svg:first-child { margin-right: 5px; }
.col-g6b .small > svg:first-child { margin-right: 5px; }

/* combo row */
.combos {
  height: 44px;
  flex: none;
  display: flex;
  gap: 9px;
  padding-top: 7px;
  background: #c8cacd;
}

.combo {
  position: relative;
  width: 149px;
  height: 32px;
  padding-left: 5px;
  background: #fff;
  line-height: 31px;
}

.combo i {
  position: absolute;
  right: 7px;
  top: 14px;
  border: 4px solid transparent;
  border-top: 5px solid #666;
  border-bottom: 0;
}

.combo-first {
  width: 134px;
  padding-left: 0;
}

.combo-first span {
  margin-left: -8px;
}

.combo-off {
  color: #aaa;
  margin-left: -1px;
}

.combo-wide {
  width: 223px;
}

/* work area */
.work {
  flex: 1;
  display: flex;
  min-height: 0;
  border-top: 2px solid #9a9a9e;
  background: #fff;
}

.panel {
  display: flex;
  flex-direction: column;
  border-right: 1px solid #c8c8c8;
  border-left: 1px solid #c8c8c8;
}

.panel-bar {
  height: 17px;
  flex: none;
  background: #d2d4d8;
  color: #777;
  font-family: "Liberation Sans", sans-serif;
  font-size: 17px;
  font-weight: bold;
  line-height: 16px;
  text-align: right;
  padding-right: 6px;
}

.panel-title {
  height: 32px;
  flex: none;
  padding-left: 12px;
  background: #eee;
  border-bottom: 2px solid #d4d4d4;
  line-height: 30px;
  color: #666;
}

/* left nav */
.nav {
  width: 288px;
  flex: none;
  border-left: 0;
}

.nav-title {
  padding-left: 0;
  text-indent: -8px;
  overflow: hidden;
}

.nav-tools {
  height: 46px;
  flex: none;
  display: flex;
  align-items: center;
  background: #eee;
  border-bottom: 2px solid #d4d4d4;
}

.minus {
  width: 4px;
  height: 3px;
  background: #3a80d0;
}

.plus2 {
  margin-left: 14px;
}

.edit {
  margin-left: 10px;
}

.tree {
  list-style: none;
  margin: 0;
  padding: 4px 0 0;
}

.tree li {
  display: flex;
  align-items: center;
  height: 39px;
  white-space: nowrap;
}

.folder svg {
  margin: 0 7px 0 -11px;
}

.leaf svg {
  flex: none;
  margin: 0 9px 0 48px;
}

.leaf-on {
  position: relative;
  background: linear-gradient(#c5d8f0, #c5d8f0) 43px 2px / 178px 34px no-repeat;
}

/* middle column */
.mid {
  position: relative;
  width: 438px;
  flex: none;
  margin-left: 7px;
  margin-right: 8px;
  display: flex;
  flex-direction: column;
  gap: 8px;
}

.list {
  height: 524px;
  flex: none;
  border-bottom: 1px solid #c8c8c8;
}

.list-tools {
  height: 88px;
  flex: none;
  padding-top: 1px;
  background: #eee;
  border-bottom: 1px solid #d4d4d4;
}

.tool-row {
  display: flex;
  height: 43px;
  align-items: center;
}

.tool {
  display: flex;
  align-items: center;
  white-space: nowrap;
}

.tool svg:first-child {
  margin-right: 6px;
}

.tool .c {
  margin-left: 11px;
}

.t-new { margin-left: 4px; }
.t-del { margin-left: 18px; }
.t-copy { margin-left: 23px; }
.t-lib { margin-left: 22px; }
.t-sort { margin-left: 6px; }
.t-filter { margin-left: 18px; }
.t-up { margin-left: 20px; }
.t-down { margin-left: 24px; }

.more {
  margin-left: 2px;
  letter-spacing: 4px;
}

.t-off {
  color: #aaa;
}

.search {
  height: 29px;
  flex: none;
  display: flex;
  align-items: center;
  justify-content: space-between;
  padding: 1px 9px 0 4px;
  border-bottom: 2px solid #d8d8d8;
  color: #999;
}

.list-tree {
  flex: 1;
  padding-top: 2px;
}

.root {
  display: flex;
  align-items: center;
  height: 28px;
  padding-left: 15px;
}

.root i {
  width: 0;
  height: 0;
  margin-right: 11px;
  border-left: 8px solid transparent;
  border-bottom: 8px solid #444;
}

.item {
  width: 133px;
  height: 32px;
  margin: 2px 0 0 60px;
  padding-left: 4px;
  background: #c5d8f0;
  line-height: 31px;
  white-space: nowrap;
  word-spacing: 4px;
}

.props {
  flex: 1;
  min-height: 0;
  border-top: 1px solid #c8c8c8;
}

.props .panel-title {
  border-bottom-width: 3px;
  height: 33px;
}

.props-body {
  flex: 1;
  background: linear-gradient(#efefef, #efefef) 0 0 / 31px 100% no-repeat, #fff;
}

.grid {
  width: 434px;
  border-collapse: collapse;
  table-layout: fixed;
}

.c0 { width: 31px; }
.c1 { width: 121px; }
.c2 { width: 220px; }
.c3 { width: 62px; }

.grid th {
  height: 25px;
  padding: 0;
  background: #eee;
  border: 1px solid #f6f6f6;
  font-weight: normal;
  line-height: 24px;
  color: #555;
}

.grid .th-on {
  background: #7ab8f7;
  color: #e8f2ff;
}

.grid td {
  height: 31.500px;
  padding: 0 0 0 5px;
  border: 2px solid #e6e6e6;
  line-height: 24px;
  white-space: nowrap;
  overflow: hidden;
}

.grid .n {
  padding: 0;
  background: #efefef;
  text-align: center;
  color: #555;
}

.grid .n-on {
  background: #7ab8f7;
  color: #fff;
  font-weight: bold;
}

.grid .link {
  color: #2a60e8;
}

.grid .cell-edit {
  border: 3px solid #777;
}

.grid .cell-off {
  background: #e8e8e8;
  color: #999;
}

.grid .ck {
  padding: 0 0 3px 18px;
}

.box {
  display: block;
  width: 20px;
  height: 20px;
  border: 1px solid #888;
  border-radius: 3px;
  background: #fff;
}

.box-on {
  position: relative;
  background: #5aa5f5;
  border-color: #5aa5f5;
}

.box-on::after {
  content: "";
  position: absolute;
  left: 5px;
  top: 3px;
  width: 9px;
  height: 6px;
  border-left: 2px solid #fff;
  border-bottom: 2px solid #fff;
  transform: rotate(-45deg);
}

.expand {
  display: inline-block;
  width: 18px;
  height: 18px;
  margin: 0 10px 0 -1px;
  border: 1px solid #777;
  border-radius: 2px;
  font-size: 14px;
  line-height: 15px;
  text-align: center;
  vertical-align: 2px;
}

.splitter {
  position: absolute;
  left: 438px;
  top: 218px;
  width: 6px;
  height: 149px;
  background: #6d7680;
}

.splitter::after {
  content: "";
  position: absolute;
  left: 1px;
  top: 68px;
  border: 4px solid transparent;
  border-left: 0;
  border-right: 4px solid #dfe3e8;
}

/* right column */
.right {
  flex: 1;
  min-width: 0;
  display: flex;
  flex-direction: column;
}

.cad {
  position: relative;
  height: 583px;
  flex: none;
  padding-top: 1px;
  background: #555;
}

.cad-svg {
  display: block;
  -webkit-text-stroke: 0;
}

.cad-t text {
  font-family: "Liberation Sans Narrow", "Liberation Sans", "Noto Sans CJK SC", sans-serif;
}

.cad-axis {
  font-family: "Liberation Sans", sans-serif;
}

.view-bar {
  position: absolute;
  right: 0;
  top: 7px;
  width: 27px;
  height: 338px;
  background: rgba(120, 122, 126, 0.6);
  border-radius: 3px 0 0 3px;
}

.view-t {
  font-family: "Liberation Sans", sans-serif;
  font-size: 11px;
  fill: #2d3238;
  -webkit-text-stroke: 0;
}

.cad-handle {
  height: 8px;
  flex: none;
  background: #fff;
  padding: 1px 0 0 388px;
}

.cad-handle span {
  position: relative;
  display: block;
  width: 150px;
  height: 6px;
  background: #6d7680;
}

.cad-handle span::after {
  content: "";
  position: absolute;
  left: 71px;
  top: 0;
  border: 4px solid transparent;
  border-bottom: 0;
  border-top: 4px solid #dfe3e8;
}

.qty {
  flex: 1;
  border-right: 0;
  min-height: 0;
}

.qty .panel-title {
  padding-left: 13px;
  height: 33px;
  line-height: 32px;
}

.qty-body {
  flex: 1;
  background: #eee;
  padding-top: 13px;
  min-height: 0;
}

.qty-head {
  display: flex;
  align-items: flex-start;
  justify-content: space-between;
  height: 36px;
  padding-left: 15px;
}

.qty-tab {
  width: 176px;
  height: 36px;
  background: #fff;
  line-height: 33px;
  text-align: center;
  color: #5aa0f0;
  white-space: nowrap;
}

.qty-btn {
  position: relative;
  z-index: 1;
  width: 202px;
  height: 39px;
  padding-left: 11px;
  background: #f8f9fb;
  border: 1px solid #ccc;
  border-right: 0;
  border-radius: 4px 0 0 4px;
  line-height: 38px;
  white-space: nowrap;
  overflow: hidden;
}

.qty-pane {
  height: 400px;
  margin-left: 12px;
  padding: 13px 0 0 14px;
  border-left: 1px solid #ccc;
  border-top: 1px solid #ccc;
}

.qty-table {
  width: 869px;
  height: 380px;
  background: #fff;
  border: 1px solid #d4d4d4;
  border-bottom: 0;
}

.qty-row {
  display: flex;
  height: 26px;
  background: #eee;
  border-bottom: 2px solid #e4e4e4;
  width: 845px;
  line-height: 25px;
  white-space: nowrap;
  font-size: 18px;
  color: #444;
}

.qty-row span {
  flex: none;
  text-align: center;
  border-right: 1px solid #ddd;
}

.q0 { width: 32px; }
.q1 { width: 73px; }
.q2 { width: 74px; }
.q3 { width: 142px; }
.q4 { width: 178px; }
.q5 { width: 154px; }
.q6 { width: 191px; }
```
